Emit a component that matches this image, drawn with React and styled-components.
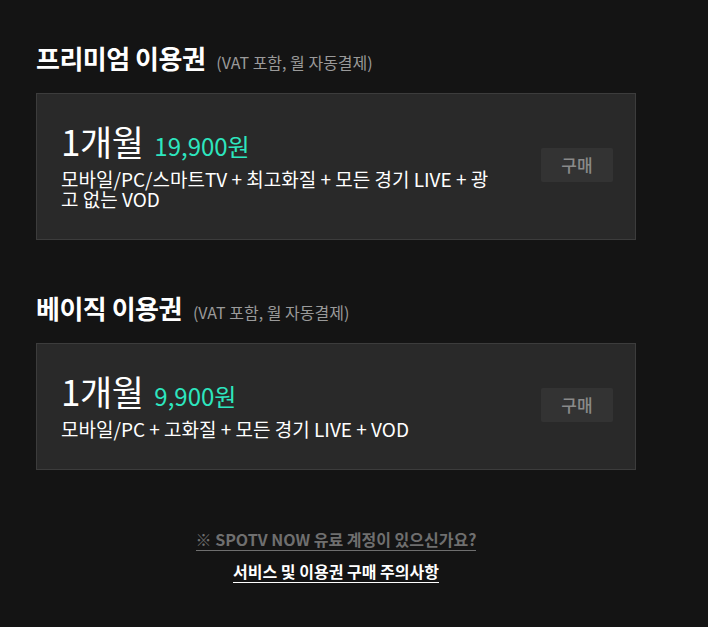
import React from "react";
import styled, { createGlobalStyle } from "styled-components";

const plans = [
  {
    name: "프리미엄 이용권",
    period: "1개월",
    price: "19,900원",
    desc: "모바일/PC/스마트TV + 최고화질 + 모든 경기 LIVE + 광고 없는 VOD",
  },
  {
    name: "베이직 이용권",
    period: "1개월",
    price: "9,900원",
    desc: "모바일/PC + 고화질 + 모든 경기 LIVE + VOD",
  },
];

const GlobalStyle = createGlobalStyle`
  html, body {
    margin: 0;
    background: #141414;
  }
  body {
    font-family: "Noto Sans CJK KR", "Noto Sans", sans-serif;
    color: #fff;
  }
`;

const Page = styled.div`
  width: 600px;
  padding: 41px 0 40px 36px;
`;

const Section = styled.section`
  & + & {
    margin-top: 51px;
  }
`;

const Heading = styled.h2`
  margin: 0 0 14px 0;
  font-size: 26px;
  font-weight: 700;
  line-height: 34px;
  letter-spacing: -0.5px;
  color: #fff;

  small {
    margin-left: 11px;
    font-size: 16px;
    font-weight: 400;
    letter-spacing: 0;
    color: #9a9a9a;
  }
`;

const Card = styled.div`
  display: flex;
  align-items: center;
  gap: 36px;
  padding: 26px 22px 30px 24px;
  background: #292929;
  border: 1px solid #3c3c3c;
`;

const Info = styled.div`
  flex: 1;
`;

const TitleRow = styled.div`
  display: flex;
  align-items: baseline;
  gap: 11px;
  line-height: 42px;
`;

const Period = styled.span`
  font-size: 35px;
  font-weight: 400;
  letter-spacing: -0.5px;
  color: #fff;
`;

const Price = styled.span`
  font-size: 24px;
  font-weight: 400;
  color: #2de6bf;
`;

const Desc = styled.p`
  margin: 2px 0 0 0;
  font-size: 19px;
  line-height: 20px;
  letter-spacing: 0;
  color: #fff;
`;

const BuyButton = styled.button`
  flex: none;
  width: 72px;
  height: 34px;
  border: 0;
  border-radius: 2px;
  background: #333333;
  color: #8a8a8a;
  font-family: inherit;
  font-size: 17px;
  font-weight: 500;
  cursor: pointer;
`;

const Footer = styled.div`
  display: flex;
  flex-direction: column;
  align-items: center;
  gap: 10px;
  margin-top: 59px;
`;

const FooterLink = styled.a`
  font-size: 16px;
  font-weight: 700;
  line-height: 20px;
  letter-spacing: 0;
  color: ${(p) => (p.$muted ? "#6f6f6f" : "#fff")};
  text-decoration: none;
  padding-bottom: 1px;
  border-bottom: 1px solid ${(p) => (p.$muted ? "#6f6f6f" : "#fff")};
  cursor: pointer;
`;

export default function App() {
  return (
    <>
      <GlobalStyle />
      <Page>
        {plans.map((plan) => (
          <Section key={plan.name}>
            <Heading>
              {plan.name}
              <small>(VAT 포함, 월 자동결제)</small>
            </Heading>
            <Card>
              <Info>
                <TitleRow>
                  <Period>{plan.period}</Period>
                  <Price>{plan.price}</Price>
                </TitleRow>
                <Desc>{plan.desc}</Desc>
              </Info>
              <BuyButton>구매</BuyButton>
            </Card>
          </Section>
        ))}
        <Footer>
          <FooterLink $muted>※ SPOTV NOW 유료 계정이 있으신가요?</FooterLink>
          <FooterLink>서비스 및 이용권 구매 주의사항</FooterLink>
        </Footer>
      </Page>
    </>
  );
}
